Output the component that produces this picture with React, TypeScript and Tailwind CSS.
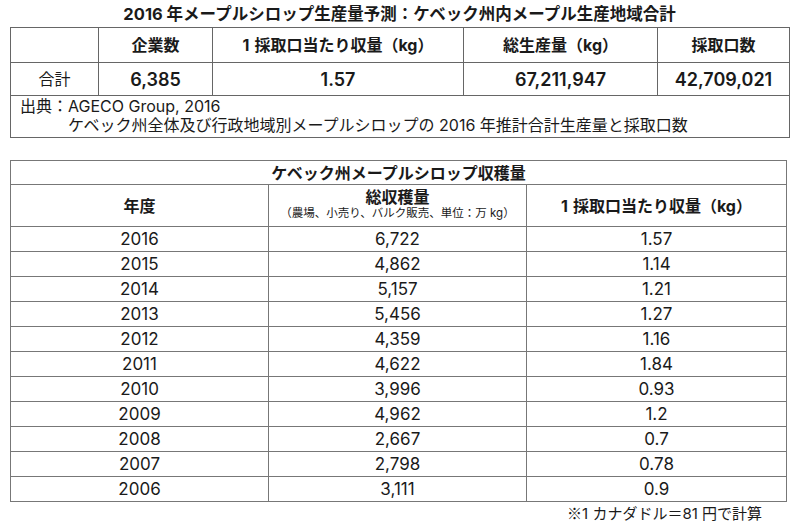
const font = { fontFamily: 'Inter, "Noto Sans CJK JP", sans-serif' };
const cjk = { fontFamily: '"Noto Sans CJK JP", sans-serif' };

const harvest = [
  ['2016', '6,722', '1.57'],
  ['2015', '4,862', '1.14'],
  ['2014', '5,157', '1.21'],
  ['2013', '5,456', '1.27'],
  ['2012', '4,359', '1.16'],
  ['2011', '4,622', '1.84'],
  ['2010', '3,996', '0.93'],
  ['2009', '4,962', '1.2'],
  ['2008', '2,667', '0.7'],
  ['2007', '2,798', '0.78'],
  ['2006', '3,111', '0.9'],
];

function PerTap() {
  return (
    <>
      <span className="mr-[5px]">1</span>採取口当たり収量（kg）
    </>
  );
}

export default function App() {
  return (
    <div
      className="w-[800px] h-[524px] bg-white text-[#1a1a1a] overflow-hidden"
      style={font}
    >
      {/* 生産量予測 */}
      <div className="pl-[10px] pr-[11px]">
        <div className="h-[27px] pt-[2px] flex items-center justify-center text-[16.5px] font-bold leading-none">
          2016 年メープルシロップ生産量予測：ケベック州内メープル生産地域合計
        </div>
        <table className="w-[779px] table-fixed border-collapse">
          <colgroup>
            <col className="w-[88px]" />
            <col className="w-[114px]" />
            <col className="w-[251px]" />
            <col className="w-[194px]" />
            <col className="w-[132px]" />
          </colgroup>
          <tbody>
            <tr className="h-[35px] text-[16px] font-bold">
              <td className="border border-[#666]"></td>
              <td className="border border-[#666] text-center">企業数</td>
              <td className="border border-[#666] text-center"><PerTap /></td>
              <td className="border border-[#666] text-center">総生産量（kg）</td>
              <td className="border border-[#666] text-center">採取口数</td>
            </tr>
            <tr className="h-[33px] text-[18px]">
              <td className="border border-[#666] text-center text-[16px]">合計</td>
              <td className="border border-[#666] text-center font-semibold">6,385</td>
              <td className="border border-[#666] text-center font-semibold">1.57</td>
              <td className="border border-[#666] text-center font-semibold">67,211,947</td>
              <td className="border border-[#666] text-center font-semibold">42,709,021</td>
            </tr>
            <tr className="h-[42px]">
              <td colSpan={5} className="border border-[#666] px-[9px] pb-[2px] text-[16px] leading-[19px]">
                <div>出典：AGECO Group, 2016</div>
                <div className="pl-[48px]">
                  ケベック州全体及び行政地域別メープルシロップの 2016 年推計合計生産量と採取口数
                </div>
              </td>
            </tr>
          </tbody>
        </table>
      </div>

      {/* 収穫量 */}
      <div className="pl-[10px] pt-[22px]">
        <table className="w-[776px] table-fixed border-collapse">
          <colgroup>
            <col className="w-[258px]" />
            <col className="w-[258px]" />
            <col className="w-[260px]" />
          </colgroup>
          <tbody>
            <tr className="h-[24px]">
              <td colSpan={3} className="border border-[#777] text-center text-[16px] font-bold leading-none">
                ケベック州メープルシロップ収穫量
              </td>
            </tr>
            <tr className="h-[42px]">
              <td className="border border-[#777] text-center text-[16px] font-bold">年度</td>
              <td className="border border-[#777] text-center leading-none pb-[3px]">
                <div className="text-[16px] font-bold">総収穫量</div>
                <div className="text-[11.5px] mt-[3px]">（農場、小売り、バルク販売、単位：万 kg）</div>
              </td>
              <td className="border border-[#777] text-center text-[16px] font-bold"><PerTap /></td>
            </tr>
            {harvest.map(([year, total, per]) => (
              <tr key={year} className="h-[25px] text-[17px] leading-none">
                <td className="border border-[#777] text-center">{year}</td>
                <td className="border border-[#777] text-center">{total}</td>
                <td className="border border-[#777] text-center">{per}</td>
              </tr>
            ))}
          </tbody>
        </table>
        <div className="w-[752px] text-right text-[15px] leading-none mt-[3px]">
          <span style={cjk}>※</span>1 カナダドル＝81 円で計算
        </div>
      </div>
    </div>
  );
}
